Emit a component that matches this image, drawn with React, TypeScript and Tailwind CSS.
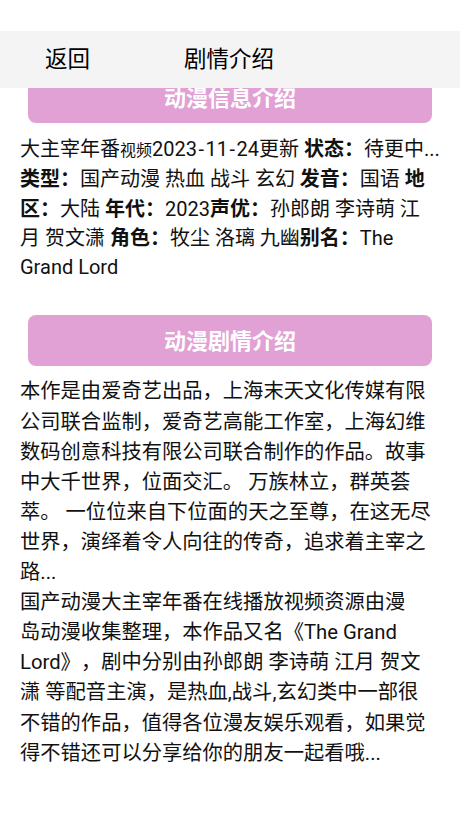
const bodyLines = [
    "本作是由爱奇艺出品，上海末天文化传媒有限",
    "公司联合监制，爱奇艺高能工作室，上海幻维",
    "数码创意科技有限公司联合制作的作品。故事",
    "中大千世界，位面交汇。 万族林立，群英荟",
    "萃。 一位位来自下位面的天之至尊，在这无尽",
    "世界，演绎着令人向往的传奇，追求着主宰之",
    "路...",
    "国产动漫大主宰年番在线播放视频资源由漫",
    "岛动漫收集整理，本作品又名《The Grand",
    "Lord》，剧中分别由孙郎朗 李诗萌 江月 贺文",
    "潇 等配音主演，是热血,战斗,玄幻类中一部很",
    "不错的作品，值得各位漫友娱乐观看，如果觉",
    "得不错还可以分享给你的朋友一起看哦...",
];

function TitleBar({ title, className }: { title: string; className?: string }) {
    return (
        <div className={"mx-[28px] h-[51px] rounded-[8px] bg-[#e1a1d5] flex items-center justify-center pt-[2px] text-white font-bold text-[22px] " + (className ?? "")}>
            {title}
        </div>
    );
}

export default function App() {
    const font = { fontFamily: 'Roboto, "Noto Sans CJK SC", sans-serif' };
    return (
        <div className="relative bg-white min-h-[819px] text-[#111] [text-spacing-trim:space-all]" style={font}>
            <div className="absolute top-[31px] left-0 w-full h-[57px] bg-[#f4f4f4] flex items-center z-10 text-[22.5px] text-black">
                <span className="ml-[45px]">返回</span>
                <span className="ml-[94px]">剧情介绍</span>
            </div>

            <div className="pt-[72px]">
                <TitleBar title="动漫信息介绍" />

                <div className="mt-[12px] pl-5 pr-[8px] text-[20px] leading-[29.3px] whitespace-nowrap">
                    <div>大主宰年番<span className="text-[16px]">视频</span>2023<span className="px-[1.5px]">-</span>11<span className="px-[1.5px]">-</span>24更新 <b>状态：</b>待更中...</div>
                    <div><b>类型：</b>国产动漫 热血 战斗 玄幻 <b>发音：</b>国语 <b>地</b></div>
                    <div><b>区：</b>大陆 <b>年代：</b>2023<b>声优：</b>孙郎朗 李诗萌 江</div>
                    <div>月 贺文潇 <b>角色：</b>牧尘 洛璃 九幽<b>别名：</b>The</div>
                    <div>Grand Lord</div>
                </div>

                <TitleBar title="动漫剧情介绍" className="mt-[33px]" />

                <div className="mt-[10px] pl-5 pr-[8px] text-[20.3px] leading-[30.1px] whitespace-nowrap">
                    {bodyLines.map((line, i) => (
                        <div key={i}>{line}</div>
                    ))}
                </div>
            </div>
        </div>
    );
}
